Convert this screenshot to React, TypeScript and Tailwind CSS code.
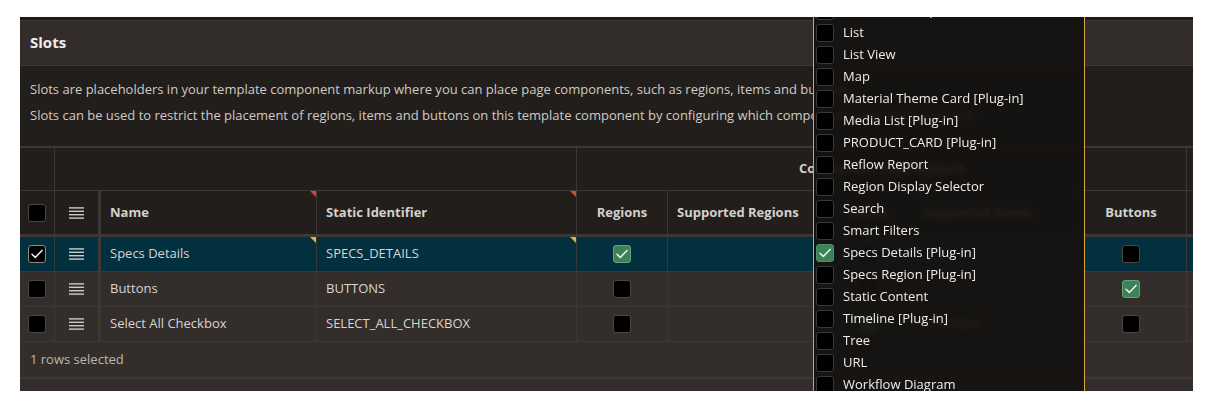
import React from "react";

const BORDER = "border-[#3d3834]";

function Check({ color = "#f2f2f2" }: { color?: string }) {
  return (
    <svg width="12" height="10" viewBox="0 0 12 10" fill="none">
      <path d="M1 5.2 L4.3 8.4 L11 1.4" stroke={color} strokeWidth="1.5" strokeLinecap="round" strokeLinejoin="round" />
    </svg>
  );
}

function Box({ checked, green }: { checked?: boolean; green?: boolean }) {
  if (green) {
    return (
      <div className="w-[18px] h-[18px] rounded-[3px] bg-[#3d8256] border border-[#67a27c] flex items-center justify-center">
        <Check color="#eef5ef" />
      </div>
    );
  }
  return (
    <div className={`w-[18px] h-[18px] rounded-[3px] bg-black border ${checked ? "border-[#8d8a87]" : "border-[#4a4744]"} flex items-center justify-center`}>
      {checked ? <Check /> : null}
    </div>
  );
}

function Handle() {
  return (
    <svg width="15" height="12" viewBox="0 0 15 12" fill="#cdc9c4">
      <rect x="0" y="0.2" width="15" height="1.4" />
      <rect x="0" y="3.6" width="15" height="1.4" />
      <rect x="0" y="7" width="15" height="1.4" />
      <rect x="0" y="10.4" width="15" height="1.4" />
    </svg>
  );
}

function Tri({ color }: { color: string }) {
  return (
    <div
      className="absolute right-0 top-0 w-0 h-0 border-l-[6px] border-l-transparent border-t-[6px]"
      style={{ borderTopColor: color }}
    />
  );
}

type Row = {
  name: string;
  id: string;
  sel: boolean;
  regions: boolean;
  items: boolean;
  supItems: string;
  buttons: boolean;
};

const rows: Row[] = [
  { name: "Specs Details", id: "SPECS_DETAILS", sel: true, regions: true, items: false, supItems: "", buttons: false },
  { name: "Buttons", id: "BUTTONS", sel: false, regions: false, items: false, supItems: "", buttons: true },
  { name: "Select All Checkbox", id: "SELECT_ALL_CHECKBOX", sel: false, regions: false, items: true, supItems: "Checkbox", buttons: false },
];

const menu: { label: string; checked?: boolean }[] = [
  { label: "Interactive Map" },
  { label: "List" },
  { label: "List View" },
  { label: "Map" },
  { label: "Material Theme Card [Plug-in]" },
  { label: "Media List [Plug-in]" },
  { label: "PRODUCT_CARD [Plug-in]" },
  { label: "Reflow Report" },
  { label: "Region Display Selector" },
  { label: "Search" },
  { label: "Smart Filters" },
  { label: "Specs Details [Plug-in]", checked: true },
  { label: "Specs Region [Plug-in]" },
  { label: "Static Content" },
  { label: "Timeline [Plug-in]" },
  { label: "Tree" },
  { label: "URL" },
  { label: "Workflow Diagram" },
  { label: "Plain Text" },
];

export default function App() {
  return (
    <div className="w-[1224px] h-[413px] bg-white pt-[17px] pl-[20px] font-['Open_Sans',sans-serif]">
      <div className="relative w-[1173px] h-[374px] overflow-hidden bg-[#332e2b]">
        {/* Header */}
        <div className={`h-[49px] border-t-[3px] border-t-[#1d1a17] border-b ${BORDER} bg-[#322d2a] flex items-center px-[10px] shadow-[inset_0_1px_0_#3b3633]`}>
          <span className="text-[15px] font-bold text-[#f1eeeb]">Slots</span>
        </div>
        {/* Description */}
        <div className="h-[80px] bg-[#221e1b] px-[10px] pt-[10px] text-[13px] text-[#d0cbc6] leading-[26px] whitespace-nowrap">
          <p>Slots are placeholders in your template component markup where you can place page components, such as regions, items and buttons.</p>
          <p>Slots can be used to restrict the placement of regions, items and buttons on this template component by configuring which component types are supported.</p>
        </div>
        {/* Grid */}
        <div className={`border-t-2 ${BORDER}`}>
          {/* Group header */}
          <div className={`flex h-[43px] border-b ${BORDER} bg-[#221e1b]`}>
            <div className={`w-[35px] border-r ${BORDER}`} />
            <div className={`w-[522px] border-r ${BORDER}`} />
            <div className={`w-[610px] border-r ${BORDER} flex items-center justify-center text-[13px] font-bold text-[#d2cec9]`}>
              Component Type Support
            </div>
            <div className="flex-1" />
          </div>
          {/* Column header */}
          <div className={`flex h-[46px] border-b-[3px] ${BORDER} bg-[#221e1b] text-[13px] font-bold text-[#d4d0cb]`}>
            <div className={`w-[35px] border-r ${BORDER} flex items-center justify-center`}>
              <Box />
            </div>
            <div className={`w-[46px] border-r-[3px] ${BORDER} flex items-center justify-center`}>
              <Handle />
            </div>
            <div className={`relative w-[216px] border-r ${BORDER} flex items-center px-[9px]`}>
              Name
              <Tri color="#d4483a" />
            </div>
            <div className={`relative w-[260px] border-r ${BORDER} flex items-center px-[9px]`}>
              Static Identifier
              <Tri color="#d4483a" />
            </div>
            <div className={`w-[91px] border-r ${BORDER} flex items-center justify-center`}>Regions</div>
            <div className={`w-[155px] border-r ${BORDER} flex items-center px-[9px]`}>Supported Regions</div>
            <div className={`w-[91px] border-r ${BORDER} flex items-center justify-center`}>Items</div>
            <div className={`w-[162px] border-r ${BORDER} flex items-center px-[9px]`}>Supported Items</div>
            <div className={`w-[111px] border-r ${BORDER} flex items-center justify-center`}>Buttons</div>
            <div className="flex-1" />
          </div>
          {/* Rows */}
          {rows.map((r, i) => (
            <div
              key={r.id}
              className={`flex h-[35px] border-b ${BORDER} text-[13px] text-[#d8d4cf] ${r.sel ? "bg-[#03303f]" : "bg-[#332e2b]"}`}
            >
              <div className={`w-[35px] border-r ${BORDER} flex items-center justify-center`}>
                <Box checked={r.sel} />
              </div>
              <div className={`w-[46px] border-r-[3px] ${BORDER} flex items-center justify-center`}>
                <Handle />
              </div>
              <div className={`relative w-[216px] border-r ${BORDER} flex items-center px-[9px]`}>
                {r.name}
                {i === 0 ? <Tri color="#e2b43f" /> : null}
              </div>
              <div className={`relative w-[260px] border-r ${BORDER} flex items-center px-[9px]`}>
                {r.id}
                {i === 0 ? <Tri color="#e2b43f" /> : null}
              </div>
              <div className={`w-[91px] border-r ${BORDER} flex items-center justify-center`}>
                <Box green={r.regions} />
              </div>
              <div className={`w-[155px] border-r ${BORDER}`} />
              <div className={`w-[91px] border-r ${BORDER} flex items-center justify-center`}>
                <Box green={r.items} />
              </div>
              <div className={`w-[162px] border-r ${BORDER} flex items-center px-[9px]`}>{r.supItems}</div>
              <div className={`w-[111px] border-r ${BORDER} flex items-center justify-center`}>
                <Box green={r.buttons} />
              </div>
              <div className="flex-1" />
            </div>
          ))}
          {/* Footer */}
          <div className={`h-[37px] border-b-[2px] ${BORDER} bg-[#332e2b] flex items-center px-[10px] text-[13px] text-[#bcb7b2]`}>
            1 rows selected
          </div>
        </div>

        {/* Dropdown overlay */}
        <div className="absolute left-[793px] top-[-17px] w-[272px] h-[460px] border-x border-[#d9a640] bg-[#141210]/[0.93] backdrop-blur-[2px]">
          {menu.map((m) => (
            <div key={m.label} className="h-[22px] flex items-center pl-[2px] whitespace-nowrap">
              <div className="w-[18px] h-[18px] shrink-0">
                {m.checked ? (
                  <div className="w-[18px] h-[18px] rounded-[3px] bg-[#3d8256] border border-[#4f9066] flex items-center justify-center">
                    <Check color="#eef5ef" />
                  </div>
                ) : (
                  <div className="w-[18px] h-[18px] rounded-[3px] bg-black border border-[#3c3936]" />
                )}
              </div>
              <span className="ml-[9px] text-[13px] text-[#f0edea]">{m.label}</span>
            </div>
          ))}
        </div>
      </div>
    </div>
  );
}
